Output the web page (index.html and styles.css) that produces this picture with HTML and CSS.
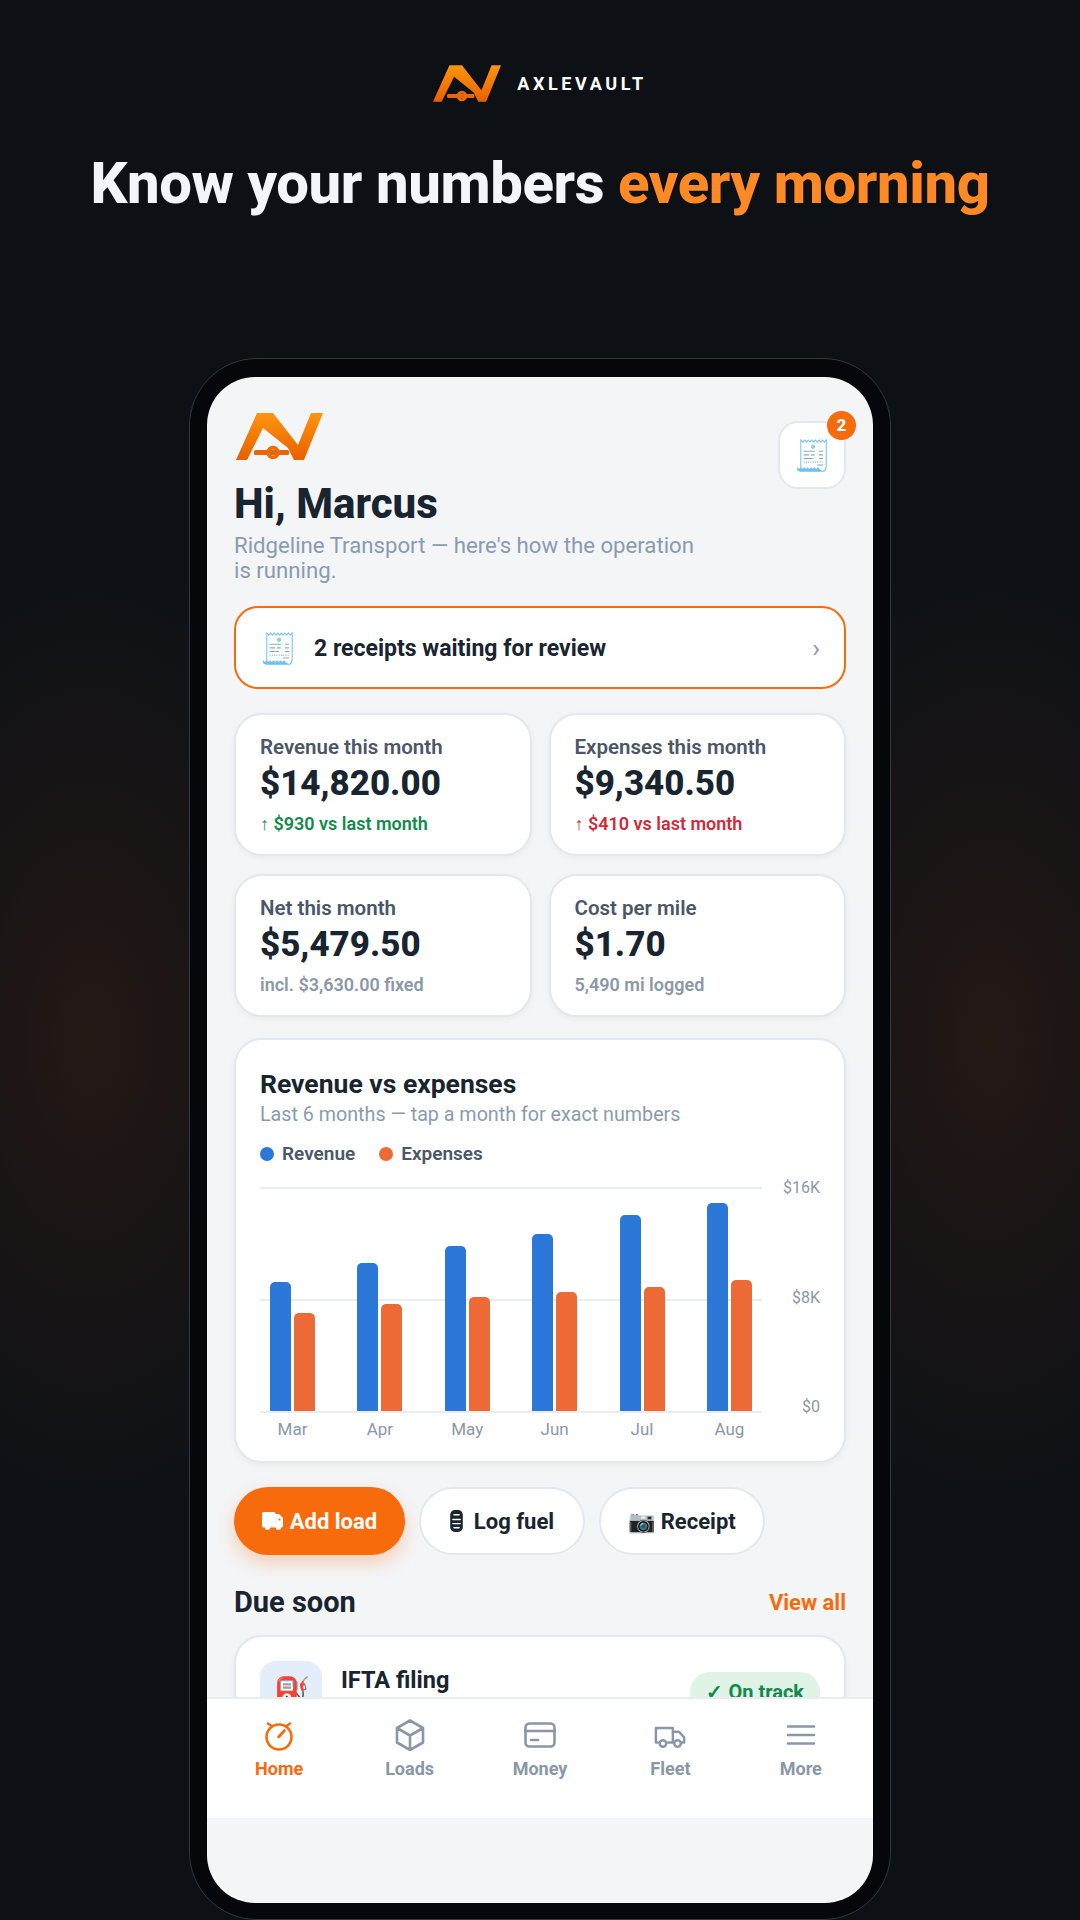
FILE: index.html
```html
<!DOCTYPE html>
<html lang="en">
<head>
  <meta charset="UTF-8">
  <meta name="viewport" content="width=device-width, initial-scale=1.0">
  <title>AxleVault - Know your numbers every morning</title>
  <link rel="stylesheet" href="styles.css">
</head>
<body>
  <svg class="defs" width="0" height="0">
    <defs>
      <linearGradient id="logoFill" x1="0" y1="0" x2="0" y2="1">
        <stop offset="0" stop-color="#ff950f"/>
        <stop offset="1" stop-color="#e85f00"/>
      </linearGradient>
      <symbol id="avLogo" viewBox="0 0 87 47">
        <path fill="url(#logoFill)" d="M0 47 21 0H37L62 32 75 0H87L68 47H58L52 35 27 15 11 47Z"/>
        <rect x="18" y="37" width="35" height="5" rx="1.500" fill="#e8660a"/>
        <circle cx="37" cy="39.500" r="4.900" fill="none" stroke="#ee6a04" stroke-width="3.700"/>
      </symbol>
    </defs>
  </svg>

  <header class="promo">
    <div class="brand">
      <svg class="brand-logo"><use href="#avLogo"/></svg>
      <span class="brand-name">AXLEVAULT</span>
    </div>
    <h1>Know your numbers <span class="accent">every morning</span></h1>
  </header>

  <div class="phone">
    <div class="screen">
      <div class="top">
        <div class="greeting">
          <svg class="top-logo"><use href="#avLogo"/></svg>
          <h2>Hi, Marcus</h2>
          <p>Ridgeline Transport — here's how the operation is running.</p>
        </div>
        <div class="inbox">
          <span class="inbox-icon">🧾</span>
          <span class="badge">2</span>
        </div>
      </div>

      <div class="banner">
        <span class="banner-icon">🧾</span>
        <span class="banner-text">2 receipts waiting for review</span>
        <span class="chevron">›</span>
      </div>

      <div class="stats">
        <div class="card stat">
          <div class="stat-label">Revenue this month</div>
          <div class="stat-value">$14,820.00</div>
          <div class="stat-note good">↑ $930 vs last month</div>
        </div>
        <div class="card stat">
          <div class="stat-label">Expenses this month</div>
          <div class="stat-value">$9,340.50</div>
          <div class="stat-note bad">↑ $410 vs last month</div>
        </div>
        <div class="card stat">
          <div class="stat-label">Net this month</div>
          <div class="stat-value">$5,479.50</div>
          <div class="stat-note">incl. $3,630.00 fixed</div>
        </div>
        <div class="card stat">
          <div class="stat-label">Cost per mile</div>
          <div class="stat-value">$1.70</div>
          <div class="stat-note">5,490 mi logged</div>
        </div>
      </div>

      <div class="card chart">
        <h3>Revenue vs expenses</h3>
        <div class="chart-sub">Last 6 months — tap a month for exact numbers</div>
        <div class="legend">
          <span class="legend-item"><i class="dot rev"></i>Revenue</span>
          <span class="legend-item"><i class="dot exp"></i>Expenses</span>
        </div>
        <div class="chart-body">
          <div class="chart-main">
            <div class="plot">
              <div class="gridline line-top"></div>
              <div class="gridline line-mid"></div>
              <div class="group"><div class="bar rev" style="height:129px"></div><div class="bar exp" style="height:98px"></div></div>
              <div class="group"><div class="bar rev" style="height:148px"></div><div class="bar exp" style="height:107px"></div></div>
              <div class="group"><div class="bar rev" style="height:165px"></div><div class="bar exp" style="height:114px"></div></div>
              <div class="group"><div class="bar rev" style="height:177px"></div><div class="bar exp" style="height:119px"></div></div>
              <div class="group"><div class="bar rev" style="height:196px"></div><div class="bar exp" style="height:124px"></div></div>
              <div class="group"><div class="bar rev" style="height:208px"></div><div class="bar exp" style="height:131px"></div></div>
            </div>
            <div class="months">
              <span>Mar</span><span>Apr</span><span>May</span><span>Jun</span><span>Jul</span><span>Aug</span>
            </div>
          </div>
          <div class="y-axis">
            <span>$16K</span><span>$8K</span><span>$0</span>
          </div>
        </div>
      </div>

      <div class="actions">
        <div class="action primary">
          <svg class="btn-icon truck" viewBox="0 0 21 18"><path d="M1.500 0H12a1.500 1.500 0 0 1 1.500 1.500V2H17l4 4v8a1.500 1.500 0 0 1-1.500 1.500H19a2.500 2.500 0 0 1-5 0H8a2.500 2.500 0 0 1-5 0H1.500A1.500 1.500 0 0 1 0 14V1.500A1.500 1.500 0 0 1 1.500 0Z"/><circle class="truck-dot" cx="17.500" cy="7.500" r="1.100"/></svg>
          Add load
        </div>
        <div class="action">
          <svg class="btn-icon drum" viewBox="0 0 12 21"><rect width="12" height="21" rx="4.500"/><path class="drum-band" d="M3.500 4.500h5M2.500 9h7M2.500 13h7M3.500 17h5"/></svg>
          Log fuel
        </div>
        <div class="action">📷 Receipt</div>
      </div>

      <div class="section-head">
        <h3>Due soon</h3>
        <span class="view-all">View all</span>
      </div>

      <div class="card due">
        <div class="due-icon">⛽</div>
        <div class="due-title">IFTA filing</div>
        <div class="pill">✓ On track</div>
      </div>

      <nav class="tabbar">
        <div class="tab active">
          <svg viewBox="0 0 32 32"><circle cx="16" cy="18" r="12.500"/><path d="M15.500 18l6-6.500M5 4.500l4 3M27 4.500l-4 3"/></svg>
          <span>Home</span>
        </div>
        <div class="tab">
          <svg viewBox="0 0 32 32"><path d="M16 1.500 29 9v14.500L16 31 3 23.500V9ZM3 9l13 7.500L29 9M16 16.500V31"/></svg>
          <span>Loads</span>
        </div>
        <div class="tab">
          <svg viewBox="0 0 32 32"><rect x="1.500" y="4.500" width="29" height="23" rx="4"/><path d="M1.500 12h29M7 21h7"/></svg>
          <span>Money</span>
        </div>
        <div class="tab">
          <svg viewBox="0 0 34 32"><path d="M4 24H2V8.500h18V24h-5M20 12.500h6.500l5.500 6V24h-2.500"/><circle cx="9.500" cy="25" r="3.500"/><circle cx="25" cy="25" r="3.500"/></svg>
          <span>Fleet</span>
        </div>
        <div class="tab">
          <svg viewBox="0 0 32 32"><path d="M3 7.500h26M3 16h26M3 24.500h26"/></svg>
          <span>More</span>
        </div>
      </nav>
    </div>
  </div>
</body>
</html>
```

FILE: styles.css
```css
* {
  box-sizing: border-box;
}

html, body {
  margin: 0;
  padding: 0;
}

body {
  width: 1080px;
  height: 1920px;
  overflow: hidden;
  font-family: Roboto, "Noto Sans", sans-serif;
  color: #182430;
  background:
    radial-gradient(ellipse 270px 490px at 90px 1040px, rgba(150, 60, 15, 0.17), transparent),
    radial-gradient(ellipse 270px 490px at 990px 1040px, rgba(150, 60, 15, 0.17), transparent),
    #0d1116;
}

.defs {
  position: absolute;
}

/* promo header */
.promo {
  padding-top: 65px;
  text-align: center;
}

.brand {
  display: flex;
  justify-content: center;
  align-items: center;
  gap: 16px;
  height: 37px;
}

.brand-logo {
  width: 68px;
  height: 37px;
}

.brand-name {
  color: #fff;
  font-size: 18px;
  font-weight: 700;
  letter-spacing: 3.6px;
}

.promo h1 {
  margin: 45px 0 0;
  color: #f2f5f9;
  font-size: 58px;
  line-height: 72px;
  font-weight: 800;
  letter-spacing: -0.4px;
}

.accent {
  color: #ff8a25;
}

/* phone frame */
.phone {
  width: 702px;
  height: 1562px;
  margin: 139px auto 0;
  padding: 18px 17px;
  border: 1px solid #2f3843;
  border-radius: 68px;
  background: #05070a;
}

.screen {
  position: relative;
  height: 1526px;
  padding: 36px 27px 0;
  overflow: hidden;
  border-radius: 48px;
  background: #f4f5f7;
}

.top {
  display: flex;
  justify-content: space-between;
  align-items: flex-start;
}

.greeting {
  width: 475px;
}

.top-logo {
  display: block;
  width: 87px;
  height: 47px;
  margin-left: 2px;
}

.greeting h2 {
  margin: 19px 0 0;
  font-size: 42px;
  line-height: 50px;
  font-weight: 800;
}

.greeting p {
  margin: 4px 0 0;
  color: #8a9bb0;
  font-size: 22.2px;
  line-height: 25px;
}

.inbox {
  position: relative;
  display: flex;
  justify-content: center;
  align-items: center;
  width: 68px;
  height: 68px;
  margin-top: 8px;
  border: 2px solid #e4e8ee;
  border-radius: 20px;
  background: #fff;
  font-size: 30px;
}

.badge {
  position: absolute;
  top: -12px;
  right: -12px;
  width: 29px;
  height: 29px;
  border-radius: 50%;
  background: #f76b0c;
  color: #fff;
  font-size: 17px;
  line-height: 29px;
  font-weight: 800;
  text-align: center;
}

.banner {
  display: flex;
  align-items: center;
  height: 83px;
  margin-top: 23px;
  padding: 1px 24px 0;
  border: 2px solid #f76b0c;
  border-radius: 24px;
  background: #fff;
}

.banner-icon {
  width: 38px;
  font-size: 30px;
}

.banner-text {
  flex: 1;
  margin-left: 16px;
  font-size: 23px;
  font-weight: 700;
}

.chevron {
  color: #8a9bb0;
  font-size: 26px;
}

.card {
  border: 2px solid #e4e8ee;
  border-radius: 28px;
  background: #fff;
  box-shadow: 0 2px 6px rgba(24, 34, 45, 0.05);
}

.stats {
  display: grid;
  grid-template-columns: 1fr 1fr;
  grid-auto-rows: 143px;
  gap: 18px 17px;
  margin-top: 24px;
}

.stat {
  padding: 19px 24px;
}

.stat-label {
  color: #4a5768;
  font-size: 20.5px;
  line-height: 26px;
  font-weight: 600;
}

.stat-value {
  margin-top: 3px;
  font-size: 35px;
  line-height: 42px;
  font-weight: 800;
}

.stat-note {
  margin-top: 8px;
  color: #8a98a8;
  font-size: 18px;
  line-height: 22px;
  font-weight: 600;
}

.good {
  color: #12894e;
}

.bad {
  color: #d02a3c;
}

/* chart */
.chart {
  height: 425px;
  margin-top: 21px;
  padding: 28px 24px 0;
}

.chart h3 {
  margin: 0;
  font-size: 26.5px;
  line-height: 32px;
  font-weight: 700;
}

.chart-sub {
  margin-top: 3px;
  color: #8a9bb0;
  font-size: 19.7px;
  line-height: 24px;
}

.legend {
  display: flex;
  gap: 24px;
  margin-top: 15px;
}

.legend-item {
  display: flex;
  align-items: center;
  gap: 8px;
  color: #4a5768;
  font-size: 19px;
  line-height: 24px;
  font-weight: 600;
}

.dot {
  width: 14px;
  height: 14px;
  border-radius: 50%;
}

.rev {
  background: #2b78d8;
}

.exp {
  background: #ed6a36;
}

.chart-body {
  display: flex;
  margin-top: 21px;
}

.chart-main {
  flex: 1;
}

.plot {
  position: relative;
  display: flex;
  justify-content: space-between;
  align-items: flex-end;
  height: 226px;
  padding: 0 10px;
  border-bottom: 2px solid #e9edf2;
}

.gridline {
  position: absolute;
  left: 0;
  right: 0;
  height: 2px;
  background: #e9edf2;
}

.line-top {
  top: 0;
}

.line-mid {
  top: 112px;
}

.group {
  position: relative;
  display: flex;
  align-items: flex-end;
  gap: 3px;
  width: 45px;
}

.bar {
  flex: 1;
  border-radius: 5px 5px 0 0;
}

.months {
  display: flex;
  justify-content: space-between;
  margin-top: 4px;
  padding: 0 10px;
  color: #8a98a8;
  font-size: 17px;
  line-height: 24px;
}

.months span {
  width: 45px;
  text-align: center;
}

.y-axis {
  display: flex;
  flex-direction: column;
  justify-content: space-between;
  width: 58px;
  height: 239px;
  margin-top: -9px;
  color: #8a98a8;
  font-size: 16px;
  line-height: 20px;
  text-align: right;
}

/* quick actions */
.actions {
  display: flex;
  gap: 14px;
  margin-top: 24px;
}

.action {
  display: flex;
  justify-content: center;
  align-items: center;
  gap: 6px;
  width: 166px;
  height: 68px;
  border: 2px solid #e4e8ee;
  border-radius: 34px;
  background: #fff;
  font-size: 22px;
  font-weight: 700;
}

.action.primary {
  gap: 7px;
  width: 171px;
  border: 0;
  background: #f76b0c;
  color: #fff;
  box-shadow: 0 8px 18px rgba(247, 107, 12, 0.28);
}

.btn-icon {
  fill: currentColor;
}

.truck {
  width: 21px;
  height: 18px;
}

.truck-dot {
  fill: #f76b0c;
}

.drum {
  width: 13px;
  height: 22px;
  margin-right: 5px;
}

.drum-band {
  fill: none;
  stroke: #fff;
  stroke-width: 1.4;
  stroke-linecap: round;
}

.section-head {
  display: flex;
  justify-content: space-between;
  align-items: center;
  margin-top: 31px;
}

.section-head h3 {
  margin: 0;
  font-size: 29px;
  line-height: 32px;
  font-weight: 700;
}

.view-all {
  color: #f76b0c;
  font-size: 22px;
  font-weight: 700;
}

.due {
  display: flex;
  align-items: flex-start;
  height: 130px;
  margin-top: 17px;
  padding: 24px 24px;
}

.due-icon {
  display: flex;
  justify-content: center;
  align-items: center;
  width: 62px;
  height: 62px;
  border-radius: 16px;
  background: #e3eefa;
  font-size: 30px;
}

.due-title {
  flex: 1;
  margin: 2px 0 0 19px;
  font-size: 23.5px;
  line-height: 34px;
  font-weight: 700;
}

.pill {
  margin-top: 11px;
  padding: 0 16px;
  height: 40px;
  border-radius: 20px;
  background: #dff3e6;
  color: #12894e;
  font-size: 20px;
  line-height: 40px;
  font-weight: 700;
}

/* bottom tabs */
.tabbar {
  position: absolute;
  left: 0;
  right: 0;
  bottom: 85px;
  display: grid;
  grid-template-columns: repeat(5, 1fr);
  height: 121px;
  padding: 20px 7px 0;
  border-top: 2px solid #e9edf2;
  background: #fff;
}

.tab {
  display: flex;
  flex-direction: column;
  align-items: center;
  color: #8a97a8;
  font-size: 18px;
  line-height: 22px;
  font-weight: 700;
}

.tab svg {
  width: 32px;
  height: 32px;
  margin-bottom: 7px;
  fill: none;
  stroke: currentColor;
  stroke-width: 2.6;
  stroke-linecap: round;
  stroke-linejoin: round;
}

.tab.active {
  color: #f76b0c;
}
```
